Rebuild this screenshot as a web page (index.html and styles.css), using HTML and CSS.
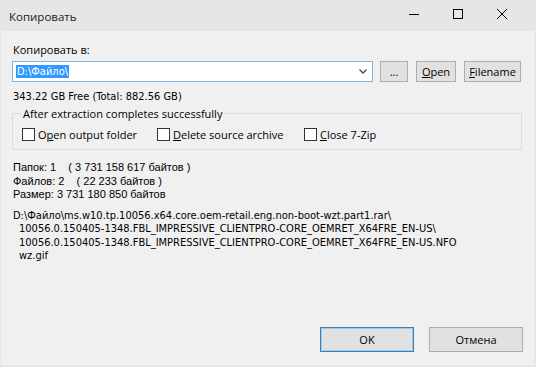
FILE: index.html
```html
<!DOCTYPE html>
<html lang="ru">
<head>
  <meta charset="UTF-8">
  <title>Копировать</title>
  <link rel="stylesheet" href="styles.css">
</head>
<body>

<div class="window">
  <div class="titlebar">
    <span class="title">Копировать</span>
    <div class="controls">
      <span class="ctl">
        <svg width="10" height="10" viewBox="0 0 10 10"><path d="M0 5.5h10" stroke="#000" stroke-width="1"/></svg>
      </span>
      <span class="ctl">
        <svg width="10" height="10" viewBox="0 0 10 10"><rect x="0.5" y="0.5" width="9" height="9" fill="none" stroke="#000"/></svg>
      </span>
      <span class="ctl">
        <svg width="10" height="10" viewBox="0 0 10 10"><path d="M0 0L10 10M10 0L0 10" stroke="#000" stroke-width="1"/></svg>
      </span>
    </div>
  </div>

  <div class="content">
    <div class="label">Копировать в:</div>

    <div class="path-row">
      <div class="combo">
        <span class="selected">D:\Файло\</span>
        <svg class="arrow" width="8" height="5" viewBox="0 0 8 5"><path d="M0.5 0.5L4 4L7.5 0.5" fill="none" stroke="#444" stroke-width="1.3"/></svg>
      </div>
      <button class="btn small">...</button>
      <button class="btn open"><u>O</u>pen</button>
      <button class="btn filename"><u>F</u>ilename</button>
    </div>

    <div class="free">343.22 GB Free (Total: 882.56 GB)</div>

    <fieldset class="group">
      <legend>After extraction completes successfully</legend>
      <label class="check"><span class="box"></span><span>O<u>p</u>en output folder</span></label>
      <label class="check"><span class="box"></span><span><u>D</u>elete source archive</span></label>
      <label class="check"><span class="box"></span><span><u>C</u>lose 7-Zip</span></label>
    </fieldset>

    <div class="info">
      <div>Папок: 1&nbsp;&nbsp;&nbsp;&nbsp;( 3 731 158 617 байтов )</div>
      <div>Файлов: 2&nbsp;&nbsp;&nbsp;&nbsp;( 22 233 байтов )</div>
      <div>Размер: 3 731 180 850 байтов</div>
    </div>

    <div class="files">
      <div>D:\Файло\ms.w10.tp.10056.x64.core.oem-retail.eng.non-boot-wzt.part1.rar\</div>
      <div class="sub">10056.0.150405-1348.FBL_IMPRESSIVE_CLIENTPRO-CORE_OEMRET_X64FRE_EN-US\</div>
      <div class="sub">10056.0.150405-1348.FBL_IMPRESSIVE_CLIENTPRO-CORE_OEMRET_X64FRE_EN-US.NFO</div>
      <div class="sub">wz.gif</div>
    </div>

    <div class="footer">
      <button class="btn big default">OK</button>
      <button class="btn big">Отмена</button>
    </div>
  </div>
</div>

</body>
</html>
```

FILE: styles.css
```css
body {
  margin: 0;
  font-family: "Open Sans", sans-serif;
  font-size: 11px;
  color: #000;
  background-color: #e6e6e6;
}

.window {
  width: 536px;
  height: 367px;
  display: flex;
  flex-direction: column;
  background-color: #e6e6e6;
}

.titlebar {
  height: 31px;
  display: flex;
  align-items: center;
  justify-content: space-between;
}

.title {
  padding-left: 9px;
  font-size: 11.5px;
  color: #222;
  margin-top: 1px;
}

.controls {
  display: flex;
  margin-right: 12px;
  height: 100%;
}

.ctl {
  width: 44px;
  display: flex;
  align-items: center;
  justify-content: center;
  padding-bottom: 4px;
}

.content {
  flex: 1;
  margin: 0 2px 2px 1px;
  background-color: #f0f0f0;
  padding: 11px 11px 0 11px;
  display: flex;
  flex-direction: column;
}

.label {
  height: 19px;
  padding-left: 1px;
}

.path-row {
  display: flex;
  align-items: center;
  height: 21px;
}

.combo {
  flex-shrink: 0;
  width: 361px;
  height: 21px;
  box-sizing: border-box;
  border: 1px solid #7eb4ea;
  background-color: #fff;
  display: flex;
  align-items: center;
  justify-content: space-between;
  padding: 0 5px 0 3px;
  margin-right: 7px;
}

.selected {
  background-color: #3399ff;
  color: #fff;
  font-family: "DejaVu Sans Condensed", sans-serif;
  padding: 0 1px;
}

.btn {
  flex-shrink: 0;
  font-family: "Open Sans", sans-serif;
  font-size: 11px;
  color: #000;
  height: 21px;
  padding: 0;
  background-color: #e1e1e1;
  border: 1px solid #adadad;
  margin-right: 8px;
}

.btn.small {
  width: 28px;
}

.btn.open {
  width: 40px;
}

.btn.filename {
  width: 57px;
  margin-right: 0;
}

.btn.big {
  width: 94px;
  height: 25px;
  margin: 0;
}

.btn.default {
  border-color: #3c7fb1;
  box-shadow: inset 0 0 0 1px #9dcaf3;
}

.free,
.files {
  font-family: "DejaVu Sans Condensed", sans-serif;
  font-size: 11px;
}

.free {
  margin-top: 8px;
  height: 12px;
  padding-left: 1px;
}

.group {
  margin: 4px 1px 0 0;
  padding: 6px 9px 7px 9px;
  border: 1px solid #dcdcdc;
  display: flex;
}

.group legend {
  padding: 0 2px;
  margin-left: -1px;
}

.check {
  display: flex;
  align-items: center;
  gap: 3px;
  height: 15px;
}

.check:nth-of-type(1) {
  width: 135px;
}

.check:nth-of-type(2) {
  width: 147px;
}

.box {
  width: 11px;
  height: 11px;
  border: 1px solid #333;
  background-color: #fff;
}

.info {
  font-family: "Liberation Sans", Arial, sans-serif;
  font-size: 11px;
  margin-top: 11px;
  line-height: 13.5px;
  padding-left: 1px;
}

.files {
  margin-top: 7px;
  line-height: 13.5px;
  padding-left: 1px;
  white-space: nowrap;
}

.files .sub {
  padding-left: 6px;
}

.footer {
  margin-top: auto;
  display: flex;
  justify-content: flex-end;
  gap: 15px;
  padding-bottom: 13px;
}
```
